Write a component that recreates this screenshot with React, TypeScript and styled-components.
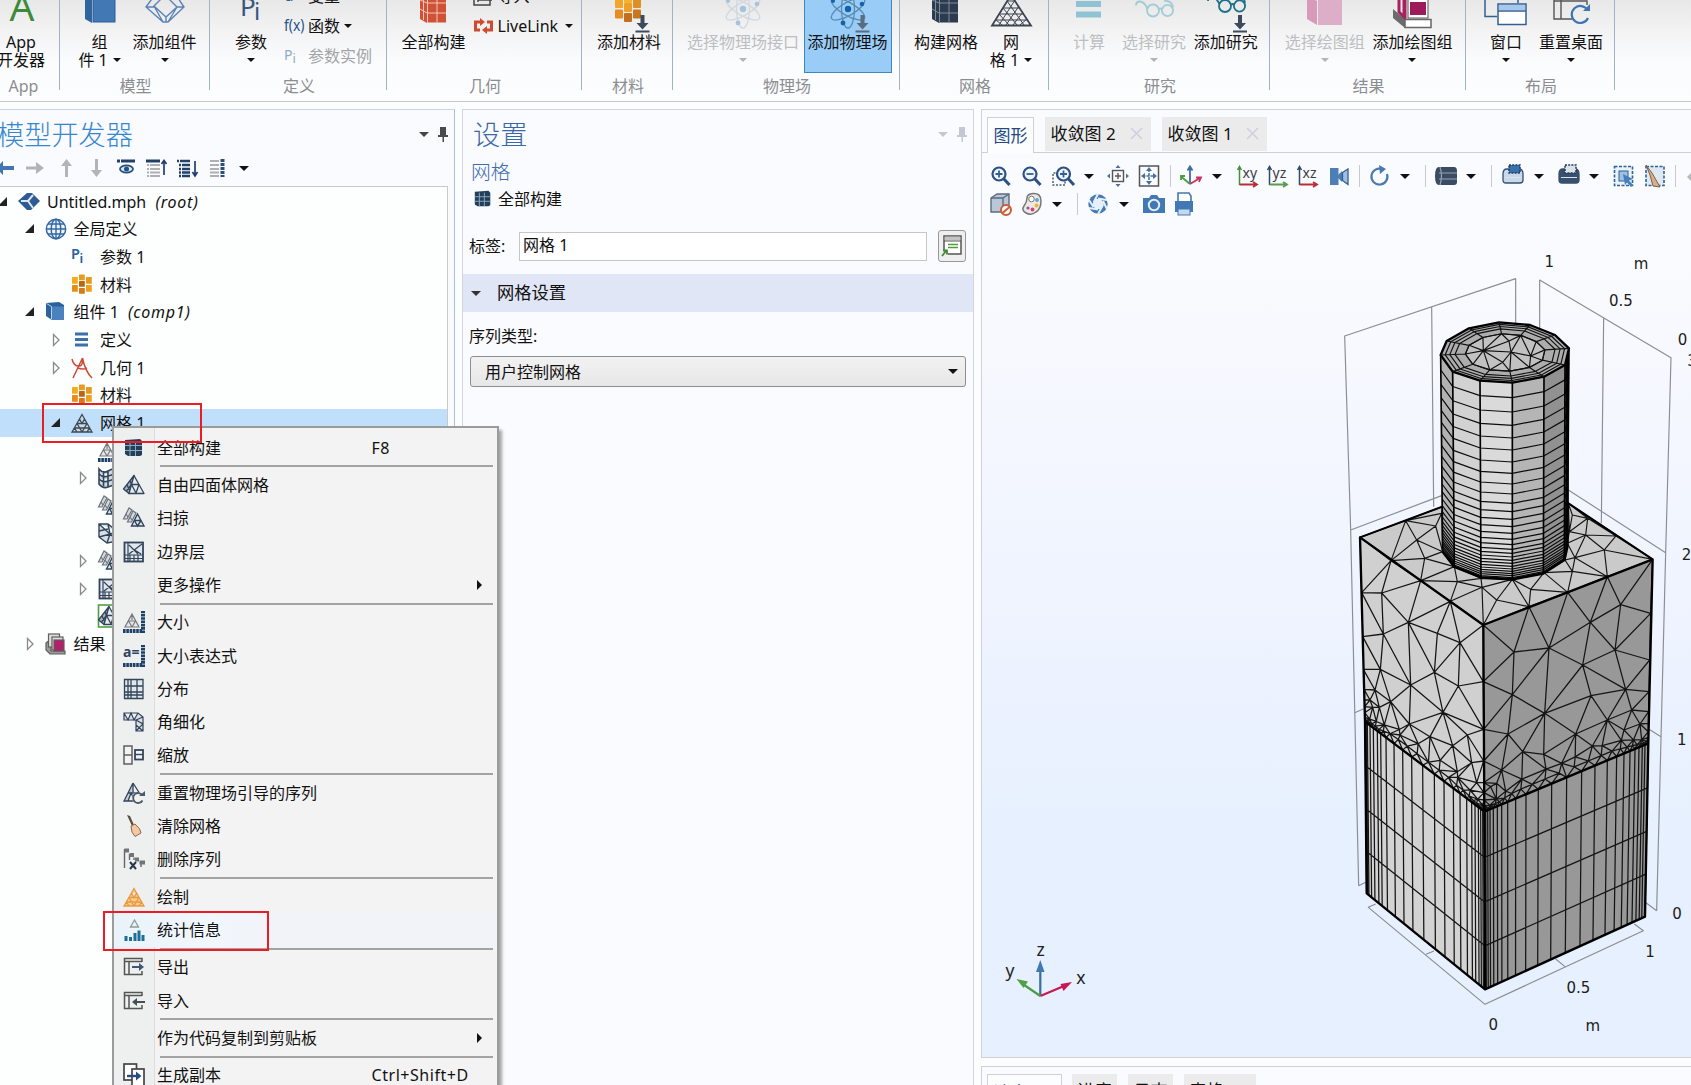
import React from 'react';
import styled, { createGlobalStyle } from 'styled-components';

const SANS = '"Noto Sans", "Noto Sans CJK SC", sans-serif';

const Global = createGlobalStyle`
  * { box-sizing: border-box; }
  body { margin: 0; overflow: hidden; background: #fcfdff; }
`;

/* ---------------------------------------------------------------- shell */

const Shell = styled.div`
  position: relative;
  display: flex;
  flex-direction: column;
  width: 1691px;
  height: 1085px;
  overflow: hidden;
  background: #fcfdff;
  color: #111;
  font-family: ${SANS};
  font-size: 16px;
  line-height: 20px;
  white-space: nowrap;
`;

const Workspace = styled.main`
  display: grid;
  grid-template-columns: 455px 512px 710px;
  column-gap: 7px;
  flex: 1;
  min-height: 0;
  padding-top: 7px;
`;

const Caret = styled.span<{ $color?: string; $size?: number }>`
  flex: none;
  display: inline-block;
  width: 0;
  height: 0;
  border-style: solid;
  border-color: ${p => p.$color ?? '#111'} transparent transparent;
  border-width: ${p => p.$size ?? 5}px ${p => p.$size ?? 5}px 0;
`;

/* --------------------------------------------------------------- ribbon */

const Ribbon = styled.header`
  flex: none;
  display: flex;
  height: 102px;
  overflow: hidden;
  background: linear-gradient(#e8e8e8 0, #f3f3f4 32px, #fbfcfe 62px, #fcfdff 100%);
  border-bottom: 1px solid #c3c6d3;
`;

const Group = styled.section<{ $w: number; $shift?: number }>`
  flex: none;
  display: flex;
  flex-direction: column;
  width: ${p => p.$w}px;
  height: 90px;
  margin-left: ${p => p.$shift ?? 0}px;
  border-right: 1px solid #a3b1c6;
`;

const GroupBody = styled.div<{ $pad: number }>`
  display: flex;
  height: 76px;
  padding-left: ${p => p.$pad}px;
`;

const GroupName = styled.div`
  height: 20px;
  text-align: center;
  color: #8b8d90;
  padding-left: 2px;
`;

const BigButton = styled.div<{ $w: number; $ml?: number; $off?: boolean; $on?: boolean }>`
  flex: none;
  display: flex;
  flex-direction: column;
  align-items: center;
  width: ${p => p.$w}px;
  height: ${p => (p.$on ? 73 : 76)}px;
  margin-left: ${p => p.$ml ?? 0}px;
  line-height: 18px;
  text-align: center;
  color: ${p => (p.$off ? '#bcbec1' : '#111')};
  background: ${p => (p.$on ? '#99cdf8' : 'none')};
  border: ${p => (p.$on ? '1px solid #3c87bd' : 'none')};
  border-top: none;
`;

const BigIcon = styled.svg`
  flex: none;
  display: block;
  width: 44px;
  height: 33px;
`;

const Line = styled.div`
  display: flex;
  align-items: center;
  justify-content: center;
  gap: 5px;
  height: 18px;
`;

const SmallColumn = styled.div<{ $ml: number }>`
  display: flex;
  flex-direction: column;
  margin: -19px 0 0 ${p => p.$ml}px;
`;

const SmallButton = styled.div<{ $off?: boolean }>`
  display: flex;
  align-items: center;
  gap: 3.500px;
  height: 30px;
  flex: none;
  color: ${p => (p.$off ? '#a2a4a8' : '#111')};
`;

const SmallIcon = styled.svg`
  flex: none;
  width: 21px;
  height: 20px;
`;

type BigProps = {
  icon: React.ReactNode; w: number; ml?: number; lines: string[];
  caret?: boolean; off?: boolean; on?: boolean;
};

function Big({ icon, w, ml, lines, caret, off, on }: BigProps) {
  return (
    <BigButton $w={w} $ml={ml} $off={off} $on={on}>
      <BigIcon viewBox="0 0 44 33">{icon}</BigIcon>
      <Line>{lines[0]}</Line>
      <Line>
        {lines[1]}
        {caret && <Caret $size={4} $color={off ? '#b4b4b4' : '#111'} />}
      </Line>
    </BigButton>
  );
}

const DownArrow = ({ x, y = 15, c = '#3b4a5c' }: { x: number; y?: number; c?: string }) => (
  <g fill={c}>
    <path d={`M${x - 2} ${y}h4v8h4l-6 6.500l-6-6.500h4z`} />
    <rect x={x - 7} y={y + 15.500} width="14" height="2" />
  </g>
);

const Cube = ({ x, top, side, front }: { x: number; top: string; side: string; front: string }) => (
  <g>
    <path d={`M${x - 2} -6l7 4v25l-7-4z`} fill={side} />
    <rect x={x + 6} y="-3" width="22" height="25" fill={front} stroke={top} strokeWidth="1" />
  </g>
);

const GridCube = ({ x, main, line }: { x: number; main: string; line: string }) => (
  <g>
    <path d={`M${x} -6l7 4v25l-7-4z`} fill={main} />
    <rect x={x + 7} y="-4" width="19" height="26.500" fill={main} />
    <path d={`M${x + 7.5} -4v27M${x + 17} -4v27M${x + 7} 3h19M${x + 7} 13h19M${x} 0l7 3M${x} 9l7 4M${x + 3.5} -4v24`}
      stroke={line} strokeWidth="1" fill="none" />
  </g>
);

const Atom = ({ ring, dot }: { ring: string; dot: string }) => (
  <g fill="none" stroke={ring} strokeWidth="1.300">
    {[0, 60, 120].map(a => (
      <ellipse key={a} cx="22" cy="9" rx="6.500" ry="19" transform={`rotate(${a} 22 9)`} />
    ))}
    <g fill={dot} stroke="none">
      <circle cx="22" cy="9" r="3.200" /><circle cx="17" cy="23" r="2.400" />
      <circle cx="36" cy="4" r="2.300" /><circle cx="7" cy="1" r="2" />
    </g>
  </g>
);

const Glasses = ({ c, y }: { c: string; y: number }) => (
  <g fill="none" stroke={c} strokeWidth="1.800">
    <circle cx="21" cy={y} r="6" /><circle cx="35.500" cy={y} r="5.600" />
    <path d={`M27 ${y - 1}q1.500-2 3 0M15.500 ${y - 2}Q12 ${y - 9} 8 ${y - 9}t-4 4M41 ${y - 3}Q40 ${y - 10} 32 ${y - 10}`} />
  </g>
);

function RibbonBar() {
  return (
    <Ribbon>
      <Group $w={74} $shift={-14}>
        <GroupBody $pad={0}>
          <Big w={70} lines={['App', '开发器']} icon={
            <text x="23" y="21" fontSize="39" textAnchor="middle" fill="#3c8b3b" fontFamily={SANS}>A</text>} />
        </GroupBody>
        <GroupName>App</GroupName>
      </Group>
      <Group $w={150}>
        <GroupBody $pad={6.600}>
          <Big w={66} lines={['组', '件 1']} caret icon={<Cube x={9} top="#2b5f9e" side="#2f649f" front="#4278b4" />} />
          <Big w={64} lines={['添加组件']} caret icon={
            <g fill="none" stroke="#5b83b5" strokeWidth="1.400">
              <path d="M3 7L14 -8H31L41 7L25 22H20Z M11 6L22 -5L34 7L23 17Z M3 7H11M34 7H41M23 17V22M11 6L20 22M34 7L25 22" />
            </g>} />
        </GroupBody>
        <GroupName>模型</GroupName>
      </Group>
      <Group $w={177}>
        <GroupBody $pad={11}>
          <Big w={60} lines={['参数']} caret icon={
            <g fill="#37577f" fontFamily={SANS}>
              <text x="11" y="16" fontSize="26">P</text><text x="25" y="20" fontSize="24">i</text>
            </g>} />
          <SmallColumn $ml={2.500}>
            <SmallButton><SmallIcon viewBox="0 0 21 20"><text x="1" y="15" fontSize="15" fill="#2f5c93">a=</text></SmallIcon>变量</SmallButton>
            <SmallButton>
              <SmallIcon viewBox="0 0 21 20"><text x="0" y="15" fontSize="15.500" fill="#28558c" textLength="20.500" lengthAdjust="spacingAndGlyphs" fontFamily={SANS}>f(x)</text></SmallIcon>
              函数<Caret $size={4} />
            </SmallButton>
            <SmallButton $off>
              <SmallIcon viewBox="0 0 21 20"><g fill="#8fabc9" fontFamily={SANS}><text x="0" y="14" fontSize="14">P</text><text x="8.500" y="17" fontSize="13">i</text></g></SmallIcon>
              参数实例
            </SmallButton>
          </SmallColumn>
        </GroupBody>
        <GroupName>定义</GroupName>
      </Group>
      <Group $w={195}>
        <GroupBody $pad={11.500}>
          <Big w={70} lines={['全部构建']} icon={<GridCube x={8} main="#cf5237" line="#f3c5b8" />} />
          <SmallColumn $ml={4.500}>
            <SmallButton>
              <SmallIcon viewBox="0 0 21 20"><path d="M1 0V19H17V14M5 0V16M5 14H19M9 10H19" stroke="#444" strokeWidth="1.500" fill="none" /><path d="M8 11l5-4v8z" fill="#c63" /></SmallIcon>
              导入<Caret $size={4} />
            </SmallButton>
            <SmallButton>
              <SmallIcon viewBox="0 0 21 20">
                <path d="M8 6H2.500V14H7M13 14H18.500V6H14" fill="none" stroke="#cf4a30" strokeWidth="3" />
                <path d="M7 2l5 4-5 4zM14 10l-5 4 5 4z" fill="#cf4a30" />
              </SmallIcon>
              LiveLink<Caret $size={4} style={{ marginLeft: 3 }} />
            </SmallButton>
          </SmallColumn>
        </GroupBody>
        <GroupName>几何</GroupName>
      </Group>
      <Group $w={91}>
        <GroupBody $pad={12}>
          <Big w={70} lines={['添加材料']} icon={
            <g>
              {[[8, -1, '#f3a429'], [8, 9.500, '#e88c1e'], [17, -6, '#f5b32d'], [17, 3, '#eea02b'], [17, 13, '#c2701d'], [26, -1, '#e08f23'], [26, 9.500, '#c9761c']].map(([x, y, c], i) => (
                <rect key={i} x={x} y={y} width="8" height="9" rx="1" fill={c as string} />
              ))}
              <DownArrow x={35.500} />
            </g>} />
        </GroupBody>
        <GroupName>材料</GroupName>
      </Group>
      <Group $w={227}>
        <GroupBody $pad={13}>
          <Big w={114} lines={['选择物理场接口']} caret off icon={<Atom ring="#d0d8df" dot="#a5c3dc" />} />
          <Big w={88} ml={3.500} lines={['添加物理场']} on icon={<g><Atom ring="#5a8bb3" dot="#1463a8" /><DownArrow x={36.500} c="#5a6d80" /></g>} />
        </GroupBody>
        <GroupName>物理场</GroupName>
      </Group>
      <Group $w={149}>
        <GroupBody $pad={13}>
          <Big w={66} lines={['构建网格']} icon={<GridCube x={8} main="#2d3b4e" line="#7f8c9c" />} />
          <Big w={60} ml={2} lines={['网', '格 1']} caret icon={
            <g fill="none" stroke="#3c4450" strokeWidth="1">
              <path d="M22 -5L42 25.500H3Z" strokeWidth="1.800" />
              <path d="M18 1H26M14 8H31M10.500 14H35M7 20H39M10 25L26 0M17 25L30 6M24 25L34 12M31 25L38 19M35 25L18 1M28 25L14 8M20 25L10 14M13 25L7 20" />
            </g>} />
        </GroupBody>
        <GroupName>网格</GroupName>
      </Group>
      <Group $w={221}>
        <GroupBody $pad={15}>
          <Big w={50} lines={['计算']} off icon={<g fill="#8fc3d4"><rect x="9" y="1" width="25" height="6" /><rect x="9" y="11.500" width="25" height="6" /></g>} />
          <Big w={68} ml={6} lines={['选择研究']} caret off icon={<Glasses c="#a3cbd7" y={10.500} />} />
          <Big w={66} ml={4.700} lines={['添加研究']} icon={<g><Glasses c="#1b7286" y={6} /><DownArrow x={36} /></g>} />
        </GroupBody>
        <GroupName>研究</GroupName>
      </Group>
      <Group $w={196}>
        <GroupBody $pad={12.800}>
          <Big w={84} lines={['选择绘图组']} caret off icon={
            <g><path d="M4 -4l10 5v24l-10-6z" fill="#d79bb9" /><rect x="15" y="0" width="24" height="25" fill="#dcaec8" /></g>} />
          <Big w={84} ml={3.700} lines={['添加绘图组']} caret icon={
            <g>
              <path d="M3 9l12 10v9L3 18z" fill="#6b6b6b" />
              <path d="M9 -2V12L15 18V-2M14 -2V16" stroke="#a5215f" strokeWidth="3" fill="none" />
              <rect x="18" y="-3" width="20" height="21" fill="#fff" stroke="#555" /><rect x="20" y="2" width="16" height="13" fill="#9d1b5a" />
              <path d="M15 19.500H41V27.500H15Z" fill="#fff" stroke="#666" strokeWidth="1.500" />
            </g>} />
        </GroupBody>
        <GroupName>结果</GroupName>
      </Group>
      <Group $w={149}>
        <GroupBody $pad={15}>
          <Big w={50} lines={['窗口']} caret icon={
            <g fill="none" stroke="#34608f" strokeWidth="1.500">
              <path d="M1 -2V16.500H13M34 -2V3" />
              <rect x="14" y="4" width="28" height="20.500" fill="#fff" /><rect x="15" y="5" width="26" height="5" fill="#a4c8ee" stroke="none" /><path d="M14 11H42" />
            </g>} />
          <Big w={66} ml={7} lines={['重置桌面']} caret icon={
            <g fill="none" stroke="#555" strokeWidth="1.400">
              <path d="M24 19H5V-2M12 0V19M5 1H38V5" /><path d="M38.500 10A8.500 8.500 0 1 0 39 18" stroke="#3f74b2" strokeWidth="2.200" />
              <path d="M34 11h7V4z" fill="#3f74b2" stroke="none" />
            </g>} />
        </GroupBody>
        <GroupName>布局</GroupName>
      </Group>
    </Ribbon>
  );
}

/* ---------------------------------------------------------- mesh glyphs */

const NAVY = '#30455c';

const Glyph = styled.svg`
  flex: none;
  display: block;
  width: 22px;
  height: 22px;
  overflow: visible;
`;

const ruler = (
  <g stroke="#1d4166" strokeWidth="4" strokeDasharray="2.600 0.700">
    <path d="M0 20H19" /><path d="M20 22V0" />
  </g>
);

const miniTriangle = (
  <path d="M9 3L16 16H2ZM5.500 10H12.500M9 16L5.500 10M9 16L12.500 10M9 3V9" fill="#e8e8e8" stroke="#75797e" strokeWidth="1.200" />
);

const sweep = (
  <g fill="#d9d9d9" stroke="#6b7580" strokeWidth="1.200">
    <path d="M6 1L0.500 12H4L9 3Z" /><path d="M10 4L4.500 15H8.500L13 6Z" /><path d="M3 7L5 10M7 10L9 13" />
    <path d="M14.500 7L8.500 19H21ZM11.500 13.500H18M11.500 13.500L14.500 19L18 13.500" fill="#e3e6e9" stroke={NAVY} strokeWidth="1.400" />
  </g>
);

const layers = (
  <g fill="none" stroke={NAVY} strokeWidth="1.200">
    <rect x="1.500" y="1.500" width="18.500" height="19" fill="#e3e6ea" strokeWidth="1.800" />
    <path d="M2 14H20M2 17.500H20M7 14V20M11 14V20M15 14V20M5 2V20M6 13L19 3M6 4L15 13M10 8L18 13" />
  </g>
);

const tetra = (
  <g strokeLinejoin="round" stroke={NAVY} strokeWidth="1.300">
    <path d="M11 1.500L0.500 15L6 19.500Z" fill="#a9b2bc" /><path d="M11 1.500L6 19.500H21Z" fill="#e8eaec" />
    <path d="M8.500 10.500H16M13 19L8.500 10.500M13 19L16 10.500M7 7L8.500 10.500M3.500 17L8.500 10.500M4 11L6.500 16" fill="none" />
  </g>
);

const meshTriangle = (c: string, f: string) => (
  <path d="M11 2.500L21 20H1ZM6 11.500H16M11 20L6 11.500M11 20L16 11.500M8.500 7L11 11.500L13.500 7M3.500 16H18.500M6 20L3.500 16M16 20L18.500 16" fill={f} stroke={c} strokeWidth="1.300" />
);

const glyphs: Record<string, React.ReactNode> = {
  root: <g><path d="M0 10L9 2L14 2L22 10L13 19L9 19Z" fill="#2f5a94" /><path d="M3 10H10L15 4M10 10L15 17" stroke="#dbe7f6" strokeWidth="2" fill="none" /></g>,
  globe: (
    <g fill="none" stroke="#34679f" strokeWidth="1.400">
      <circle cx="11" cy="11" r="9.700" fill="#edf4fb" /><ellipse cx="11" cy="11" rx="4.800" ry="9.700" /><path d="M11 1V21M1.500 11H20.500M3 6H19M3 16H19" />
    </g>),
  pi: <g fill="#2e609c" fontFamily={SANS} fontWeight="600"><text x="0" y="13" fontSize="14.500">P</text><text x="8.500" y="17" fontSize="13">i</text></g>,
  material: (
    <g>
      {[[1, 3, '#f5ab20'], [1, 11, '#e98c16'], [8, 0.500, '#e99a20'], [8, 7, '#b9680f'], [8, 14, '#d57a14'], [15, 3, '#e7981e'], [15, 11, '#f0a01c']].map(([x, y, c], i) => (
        <rect key={i} x={x} y={y} width="5.800" height={i > 1 && i < 5 ? 5.8 : 6.8} rx="0.500" fill={c as string} />
      ))}
    </g>),
  component: <g><path d="M1 2L14 1L19 4V19H7L1 15Z" fill="#2d619e" /><path d="M1.500 2.500L6.500 5.500V18" stroke="#b9d2ec" fill="none" /><rect x="7" y="5.500" width="12" height="13.500" fill="#4a82bf" /></g>,
  defs: <path d="M4 5H17M4 10.500H17M4 16H17" stroke="#3d70a8" strokeWidth="3" />,
  geometry: <path d="M1 2Q3 10 9 9Q12 8 11.500 1M11.500 1L2 21M11.500 1Q14 14 21 21M7 11Q12 13 16 11" fill="none" stroke="#cb4b37" strokeWidth="1.500" />,
  mesh: meshTriangle('#3b4a58', '#cfd8e0'),
  plotMesh: meshTriangle('#ea9a3e', '#f8cb92'),
  size: <g>{miniTriangle}{ruler}</g>,
  sizeExpr: <g><text x="0" y="12" fontSize="14" fontWeight="700" fill={NAVY} fontFamily={SANS}>a=</text>{ruler}</g>,
  mapped: <path d="M1 2Q5 7 10 4T20 2V17Q15 18 10 20T1 17ZM5.500 4V19M10 4V20M15 3V18.500M1 7Q5 11 10 9T20 7M1 12Q5 16 10 14T20 12" fill="#cfd6dd" stroke={NAVY} strokeWidth="1.600" />,
  sweep, layers, tetra,
  convert: <path d="M1 1H10L20 9V18L9 20L1 14ZM1 1L12 11L20 9M1 14L12 11L9 20M10 1L12 11M12 11L20 18M1 8L10 6" fill="#d9dee3" stroke={NAVY} strokeWidth="1.400" />,
  greenTetra: <g><rect x="0.500" y="0" width="22" height="22" fill="#fff" stroke="#4f9e45" strokeWidth="1.600" />{tetra}</g>,
  results: (
    <g stroke="#5f5f5f" strokeWidth="1.200">
      <path d="M1 10L6 6V18H20V21H5L1 17Z" fill="#999" /><rect x="3.500" y="1" width="11" height="13" fill="#ddd" /><rect x="7" y="4" width="11" height="13" fill="#ddd" />
      <rect x="9" y="7" width="10" height="11" fill="#b3206a" />
    </g>),
  build: (
    <g><path d="M2 3L17 2L19 4V18L17 19H5L2 17Z" fill="#22405a" /><path d="M7 4V19M12.500 4V19M2 8.500H19M2 13.500H19" stroke="#93abc2" strokeWidth="1" /></g>),
  grid: <path d="M1.500 1.500H20V20.500H1.500ZM5 2V20M8 2V20M14 2V20M2 8H20M2 14H20M2 17H20" fill="#e4e7ea" stroke={NAVY} strokeWidth="1.300" />,
  corner: <path d="M1 2H15L20 6V20H13V9H1ZM1 2L5 9L8 2L11 9L15 2M13 9L20 6M13 9L20 13L13 20M13 14L20 20" fill="#dcdfe3" stroke={NAVY} strokeWidth="1.200" />,
  scale: (
    <g fill="#f3f3f3" stroke="#555" strokeWidth="1.400">
      <rect x="1" y="2" width="8" height="18" /><path d="M1 11H9" /><rect x="12" y="6" width="8" height="9.500" stroke={NAVY} strokeWidth="1.800" /><path d="M12 10.500H20" stroke={NAVY} />
    </g>),
  reset: (
    <g><path d="M10 1L1 19H11M10 1L17 12M5 11H13M10 1V10M5 19L8 11L11 17" fill="#c9ced4" stroke={NAVY} strokeWidth="1.300" />
      <circle cx="15" cy="16" r="6" fill="#f1f1f1" /><path d="M19.500 13.500A5 5 0 1 0 19.500 18.500" fill="none" stroke="#4b5865" strokeWidth="1.800" /><path d="M16 14h6V9z" fill="#4b5865" /></g>),
  broom: <g><path d="M4 0L7 1L11 10L9 11Z" fill="#5b4c43" /><path d="M8 11L12 9Q18 14 18 18L12 21.500Q8 18 8 11Z" fill="#f2c9a2" stroke="#8c6a4d" /></g>,
  deleteSeq: (
    <g fill="none" stroke="#666" strokeWidth="1.400"><path d="M1.500 1V20M6.500 6V12M11 9.500V12M18 14V19" /><path d="M1.500 2.500H6M6.500 7H11M12 11.500H16M16.500 14.500H22" strokeWidth="4" stroke="#70757a" /><path d="M7 14L13 21M13 14L7 21" stroke="#26384c" strokeWidth="2" /></g>),
  stats: (
    <g><path d="M11.500 1L15.500 8H7.500Z" fill="none" stroke="#8c9a98" strokeWidth="1.300" /><path d="M3 22V17M7.500 22V18M12 22V14M16 22V11.500M20 22V16" stroke="#1d6f94" strokeWidth="3" /></g>),
  export: (
    <g fill="none" stroke="#555" strokeWidth="1.500"><path d="M19 6V2.500H1.500V18.500H19V15M1.500 5.500H19M6 5V18" /><path d="M9 11H19" stroke="#3c5873" strokeWidth="2" /><path d="M16 7L21 11L16 15Z" fill="#3c5873" stroke="none" /></g>),
  import: (
    <g fill="none" stroke="#555" strokeWidth="1.500"><path d="M19 6V2.500H1.500V18.500H19V15M1.500 5.500H19M6 5V18" /><path d="M12 12H22" stroke="#454f59" strokeWidth="2" /><path d="M14 8L9 12L14 16Z" fill="#454f59" stroke="none" /></g>),
  duplicate: (
    <g fill="#fff" stroke="#444" strokeWidth="1.700"><rect x="1" y="0" width="12.500" height="16" /><rect x="9" y="5" width="12" height="17" /><path d="M4 12H15" stroke="#284d80" strokeWidth="2.400" /><path d="M13 7.500L18.500 12L13 16.500Z" fill="#284d80" stroke="none" /></g>),
};

/* --------------------------------------------------------- left panel */

const Panel = styled.section<{ $c: string; $top?: string }>`
  display: flex;
  flex-direction: column;
  min-width: 0;
  background: #fafbfe;
  border: 1.500px solid ${p => p.$c};
  border-top: 1.500px solid ${p => p.$top ?? p.$c};
  border-bottom: none;
`;

const TreePanel = styled(Panel)`
  border-left: none;
`;

const PanelHead = styled.div<{ $pl: number; $pr: number }>`
  display: flex;
  align-items: center;
  height: 46px;
  padding: 3px ${p => p.$pr}px 0 ${p => p.$pl}px;
`;

const PanelTitle = styled.h1<{ $c: string; $ml: number }>`
  flex: 1;
  margin: 0 0 0 ${p => p.$ml}px;
  font-size: 27.200px;
  line-height: 34px;
  font-weight: 300;
  color: ${p => p.$c};
`;

const Pin = ({ c }: { c: string }) => (
  <svg width="12" height="16" viewBox="0 0 12 16"><path d="M3 0H9V8H11V10H7V15H5.500V10H1V8H3Z" fill={c} /></svg>
);

const HeadTools = styled.div<{ $ml?: number }>`
  display: flex;
  align-items: center;
  gap: 8px;
  margin-left: ${p => p.$ml ?? 0}px;
`;

const TreeTools = styled.div`
  display: flex;
  align-items: center;
  height: 30px;
  margin-top: -3px;
`;

const TreeTool = styled.svg<{ $ml: number }>`
  flex: none;
  width: 22px;
  height: 22px;
  margin-left: ${p => p.$ml}px;
`;

const TreeBox = styled.div`
  flex: 1;
  width: 448px;
  margin-top: 3px;
  padding-top: 1px;
  background: #fdfefe;
  border-top: 1.500px solid #c7c9d1;
  border-right: 1px solid #c7c9d1;
`;

const TreeRow = styled.div<{ $level: number; $selected?: boolean }>`
  display: flex;
  align-items: center;
  height: 27.650px;
  padding-left: ${p => p.$level * 26.5}px;
  background: ${p => (p.$selected ? '#bfdffa' : 'none')};
`;

const Expander = styled.svg`
  flex: none;
  width: 12px;
  height: 14px;
  margin: 0 9px 0 -3px;
  overflow: visible;
`;

const TreeText = styled.span`
  margin-left: 7px;
  em { margin-left: 5px; letter-spacing: 0.700px; }
`;

type Node = [level: number, icon: string, label: string, open?: 'open' | 'shut', tag?: string];
const tree: Node[] = [
  [0, 'root', 'Untitled.mph', 'open', '(root)'],
  [1, 'globe', '全局定义', 'open'],
  [2, 'pi', '参数 1'],
  [2, 'material', '材料'],
  [1, 'component', '组件 1', 'open', '(comp1)'],
  [2, 'defs', '定义', 'shut'],
  [2, 'geometry', '几何 1', 'shut'],
  [2, 'material', '材料'],
  [2, 'mesh', '网格 1', 'open'],
  [3, 'size', ''],
  [3, 'mapped', '', 'shut'],
  [3, 'sweep', ''],
  [3, 'convert', ''],
  [3, 'sweep', '', 'shut'],
  [3, 'layers', '', 'shut'],
  [3, 'greenTetra', ''],
  [1, 'results', '结果', 'shut'],
];

function ModelBuilder() {
  return (
    <TreePanel $c="#a9bfd9" $top="#c3d6ee">
      <PanelHead $pl={0} $pr={5}>
        <PanelTitle $c="#3787cf" $ml={-3}>模型开发器</PanelTitle>
        <HeadTools><Caret $size={5.500} $color="#444" /><Pin c="#4a4a4a" /></HeadTools>
      </PanelHead>
      <TreeTools>
        <TreeTool $ml={-6} viewBox="0 0 22 22"><path d="M20 9H9V4L2 11L9 18V13H20Z" fill="#4375b0" /></TreeTool>
        <TreeTool $ml={9} viewBox="0 0 22 22"><path d="M1 9.500H11V5L19 11L11 17V12.500H1Z" fill="#b4b4b6" /></TreeTool>
        <TreeTool $ml={9} viewBox="0 0 22 22"><path d="M9 20V9H5L10.500 2L16 9H12V20Z" fill="#b4b4b6" /></TreeTool>
        <TreeTool $ml={8} viewBox="0 0 22 22"><path d="M9 2V13H5L10.500 20L16 13H12V2Z" fill="#b4b4b6" /></TreeTool>
        <TreeTool $ml={7} viewBox="0 0 22 22"><path d="M2 4H20" stroke="#23406b" strokeWidth="3" strokeDasharray="3 1 15" /><ellipse cx="11.500" cy="12" rx="6.500" ry="3.600" fill="#dbe6f3" stroke="#23507f" strokeWidth="1.800" /><circle cx="11.500" cy="12" r="2.500" fill="#23507f" /></TreeTool>
        <TreeTool $ml={9} viewBox="0 0 22 22"><path d="M0 4H14" stroke="#23406b" strokeWidth="3" /><path d="M1 8H14M1 12H14M1 15.500H14M1 19H14" stroke="#b0b0b4" strokeWidth="2" strokeDasharray="2 1 12" /><path d="M18 18V4M15.500 7L18 3.500L20.500 7" stroke="#23406b" strokeWidth="1.700" fill="none" /></TreeTool>
        <TreeTool $ml={9} viewBox="0 0 22 22"><path d="M0 4H13M2 8H13M2 12H13M2 15.500H13M2 19H13" stroke="#23406b" strokeWidth="2.400" strokeDasharray="2 1 12" /><path d="M18 4V18M15.500 15L18 19L20.500 15" stroke="#23406b" strokeWidth="1.700" fill="none" /></TreeTool>
        <TreeTool $ml={8} viewBox="0 0 22 22"><path d="M3 4H12M3 8H12M3 12H12M3 15.500H12M3 19H12" stroke="#b0b0b4" strokeWidth="2.200" /><path d="M15.500 2V20" stroke="#2a4c80" strokeWidth="4" strokeDasharray="3 1" /></TreeTool>
        <HeadTools $ml={10}><Caret /></HeadTools>
      </TreeTools>
      <TreeBox>
        {tree.map(([level, icon, label, state, tag], i) => (
          <TreeRow key={i} $level={level} $selected={label === '网格 1'}>
            <Expander viewBox="0 0 12 14">
              {state === 'open' && <path d="M10 2V11H1Z" fill="#222" />}
              {state === 'shut' && <path d="M3.500 1.500L9 7L3.500 12.500Z" fill="#fff" stroke="#8a8a8a" strokeWidth="1.300" />}
            </Expander>
            <Glyph viewBox="0 0 22 22">{glyphs[icon]}</Glyph>
            <TreeText>{label} {tag && <em>{tag}</em>}</TreeText>
          </TreeRow>
        ))}
      </TreeBox>
    </TreePanel>
  );
}

/* ------------------------------------------------------------ settings */

const Subtitle = styled.div`
  height: 26px;
  padding: 3px 0 0 8px;
  font-size: 19.800px;
  line-height: 26px;
  font-weight: 300;
  color: #3f6cae;
`;

const BuildRow = styled.div`
  display: flex;
  align-items: center;
  gap: 5px;
  height: 26px;
  margin-top: 4px;
  padding-left: 10px;
`;

const BuildGlyph = styled(Glyph)`
  width: 20px;
  height: 20px;
`;

const LabelRow = styled.div`
  display: flex;
  align-items: center;
  height: 32px;
  margin-top: 18px;
  padding: 0 7px 0 6px;
`;

const FieldLabel = styled.span`
  width: 50px;
`;

const TextField = styled.div`
  width: 408px;
  height: 29px;
  padding: 2px 3px;
  background: #fff;
  border: 1.500px solid #c6c6c8;
`;

const SquareButton = styled.div`
  display: flex;
  align-items: center;
  justify-content: center;
  width: 28px;
  height: 32px;
  margin-left: 10.500px;
  border: 1.500px solid #98989a;
  border-radius: 3px;
  background: #efefef;
`;

const SectionHead = styled.div`
  display: flex;
  align-items: center;
  gap: 16px;
  height: 38px;
  margin-top: 12px;
  padding-left: 8px;
  background: #e0e6f5;
  font-size: 17.300px;
`;

const TypeLabel = styled.div`
  height: 20px;
  margin: 14px 0 10px 6px;
`;

const Select = styled.div`
  display: flex;
  align-items: center;
  justify-content: space-between;
  height: 31px;
  margin: 0 7px 0 7px;
  padding: 0 7px 0 14px;
  border: 1.500px solid #8e8e90;
  border-radius: 3px;
  background: linear-gradient(#f2f2f3, #e7e7e8);
`;

function Settings() {
  return (
    <Panel $c="#d3d5da">
      <PanelHead $pl={11} $pr={5}>
        <PanelTitle $c="#3b67a7" $ml={-1}>设置</PanelTitle>
        <HeadTools><Caret $size={5.500} $color="#c6c7d6" /><Pin c="#c6c7d6" /></HeadTools>
      </PanelHead>
      <Subtitle>网格</Subtitle>
      <BuildRow>
        <BuildGlyph viewBox="0 0 22 22">{glyphs.build}</BuildGlyph>
        全部构建
      </BuildRow>
      <LabelRow>
        <FieldLabel>标签:</FieldLabel>
        <TextField>网格 1</TextField>
        <SquareButton>
          <svg width="22" height="24" viewBox="0 0 22 24">
            <rect x="3" y="2" width="17" height="18" fill="#fff" stroke="#555" strokeWidth="1.500" />
            <rect x="3.700" y="2.700" width="15.600" height="3.600" fill="#c4c4c4" /><path d="M3 7H20" stroke="#555" />
            <path d="M7 10.500H17M7 13.500H17" stroke="#549a3d" strokeWidth="1.600" />
            <path d="M0 16H7V22H0Z" fill="#efefef" /><path d="M1 22L5 17M2 16.500H6V20.500" stroke="#3f8b34" strokeWidth="1.800" fill="none" />
          </svg>
        </SquareButton>
      </LabelRow>
      <SectionHead><Caret $size={5.500} $color="#333" />网格设置</SectionHead>
      <TypeLabel>序列类型:</TypeLabel>
      <Select>用户控制网格<Caret $size={5} /></Select>
    </Panel>
  );
}

/* -------------------------------------------------------- mesh drawing */

type P = [number, number];

/** Bowyer–Watson triangulation; returns the unique edges as one path. */
function triangulate(pts: P[]): string {
  const big: P[] = [[-9000, -9000], [9000, -9500], [300, 12000]];
  const all = [...pts, ...big];
  const n = pts.length;
  let tris: number[][] = [[n, n + 1, n + 2]];
  for (let i = 0; i < n; i++) {
    const [px, py] = all[i];
    const bad = tris.filter(([a, b, c]) => {
      const [ax, ay] = all[a], [bx, by] = all[b], [cx, cy] = all[c];
      const d = 2 * (ax * (by - cy) + bx * (cy - ay) + cx * (ay - by));
      if (!d) return true;
      const a2 = ax * ax + ay * ay, b2 = bx * bx + by * by, c2 = cx * cx + cy * cy;
      const ux = (a2 * (by - cy) + b2 * (cy - ay) + c2 * (ay - by)) / d;
      const uy = (a2 * (cx - bx) + b2 * (ax - cx) + c2 * (bx - ax)) / d;
      return (px - ux) ** 2 + (py - uy) ** 2 < (ax - ux) ** 2 + (ay - uy) ** 2;
    });
    const count = new Map<string, number>();
    bad.forEach(([a, b, c]) => [[a, b], [b, c], [c, a]].forEach(([s, t]) => {
      const k = s < t ? `${s},${t}` : `${t},${s}`;
      count.set(k, (count.get(k) ?? 0) + 1);
    }));
    tris = tris.filter(t => !bad.includes(t));
    count.forEach((v, k) => {
      if (v === 1) { const [s, t] = k.split(',').map(Number); tris.push([s, t, i]); }
    });
  }
  const edges = new Set<string>();
  tris.filter(t => t.every(v => v < n)).forEach(([a, b, c]) =>
    [[a, b], [b, c], [c, a]].forEach(([s, t]) => edges.add(s < t ? `${s},${t}` : `${t},${s}`)));
  return [...edges].map(k => {
    const [s, t] = k.split(',').map(Number);
    return `M${all[s][0]} ${all[s][1]}L${all[t][0]} ${all[t][1]}`;
  }).join('');
}

const mix = (a: P, b: P, t: number): P => [a[0] + (b[0] - a[0]) * t, a[1] + (b[1] - a[1]) * t];
const poly = (p: P[]) => p.map(q => q.join(',')).join(' ');
const seg = (a: P, b: P) => `M${a[0]} ${a[1]}L${b[0]} ${b[1]}`;

const leftX = [135, 138, 142, 150, 160, 172, 182, 198, 222, 248, 275, 308, 343, 372, 400, 420, 440, 455, 465, 475, 482, 488, 493];
const rightX = [493, 497, 503, 510, 520, 532, 545, 563, 587, 618, 655, 695, 740, 785, 825, 862, 890, 912, 930, 945, 957, 967, 975, 985];
const leftSeam: P[] = leftX.map(x => [x, 365 + ((x - 135) * 270) / 358]);
const rightSeam: P[] = rightX.map(x => [x, 635 - ((x - 493) * 205) / 492]);

/** Two graded rows of nodes that refine the mesh towards a seam. */
function refine(seam: P[]): P[] {
  const out: P[] = [];
  for (let i = 1; i < seam.length; i++) {
    const h = Math.min(26, Math.max(7, seam[i][0] - seam[i - 1][0]));
    const m = mix(seam[i - 1], seam[i], 0.5);
    out.push([m[0], m[1] - h * 0.85]);
    if (i % 2 && i > 1 && i < seam.length - 1) out.push([m[0] + 3, m[1] - h * 2]);
  }
  return out;
}

const frontEdge: P[] = [[490, 75], [490, 245], [491, 388], [491, 483], [491, 548], [492, 578], [492, 600], [492, 618]];
const leftFace: P[] = [
  ...leftSeam, ...refine(leftSeam), ...frontEdge,
  [120, -188], [125, -22], [128, 110], [130, 208], [132, 268], [133, 300], [134, 320], [134, 338], [135, 352],
  [213, -118], [302, -58], [391, 4],
  [185, -21], [265, 67], [190, 102], [352, 100], [420, 128], [181, 208], [272, 255], [343, 217], [415, 258],
  [212, 305], [165, 270], [369, 337], [330, 410], [268, 372], [178, 322], [240, 405], [442, 405], [398, 437], [455, 488], [412, 515], [470, 548], [150, 300], [158, 322],
];
const rightFace: P[] = [
  ...rightSeam, ...refine(rightSeam), ...frontEdge,
  [998, -122], [992, 40], [989, 180], [987, 275], [986, 335], [985, 370], [985, 395], [985, 412],
  [627, 20], [743, -23], [862, -70],
  [582, 156], [687, 144], [788, 195], [811, 67], [902, 14], [885, 150], [577, 284], [674, 340], [813, 287], [917, 268],
  [862, 360], [935, 330], [564, 402], [608, 455], [671, 463], [767, 402], [817, 438], [912, 390], [725, 490], [545, 510], [960, 372], [512, 560], [530, 550],
];
const topFace: P[] = [
  [120, 922], [257, 872], [367, 830], [213, 992], [302, 1052], [391, 1114], [490, 1185], [627, 1130], [743, 1087], [862, 1040], [998, 988],
  [803, 865], [888, 918], [745, 820], [619, 736], [290, 930], [347, 888], [365, 850], [314, 985], [368, 965], [403, 1010], [483, 1045], [577, 1048],
  [672, 1028], [735, 990], [742, 940], [412, 1055], [486, 1072], [530, 1110], [632, 1078], [757, 1024], [765, 983], [853, 960], [797, 915], [748, 905], [757, 855],
];

const capRim: P[] = [[362, 375], [380, 333], [447, 295], [537, 277], [630, 285], [705, 315], [747, 355], [735, 405], [672, 440], [577, 458], [480, 452], [398, 425]];
const capCentre: P = [557, 367];
const capRing = (s: number): P[] => capRim.map(p => mix(capCentre, p, s));
const inner = capRing(0.62);
const capCore = triangulate([...inner, [567, 333], [490, 362], [548, 397], [573, 366], [632, 378]]);

const barTop: P[] = [[362, 375], [398, 425], [480, 452], [577, 458], [672, 440], [735, 405], [747, 355]];
const barBottom: P[] = [[368, 965], [403, 1010], [483, 1042], [577, 1048], [670, 1030], [733, 990], [742, 950]];
const barFill = ['#b2b2b2', '#d2d2d2', '#dadada', '#b5b5b5', '#919191', '#4c4c4c'];
const barRows = [503, 546, 586, 624, 660, 696, 730, 762, 792, 820, 845, 868, 890, 910, 928, 944, 958, 970, 981, 991, 1000, 1009, 1017, 1024, 1031, 1037, 1043]
  .map(y => (y - 458) / 590);

function sideGrid(seam: P[], bottomA: P, bottomB: P) {
  const a = seam[0], b = seam[seam.length - 1];
  const verticals = seam.map(p => seg(p, mix(bottomA, bottomB, (p[0] - a[0]) / (b[0] - a[0])))).join('');
  const horizontals = [0.257, 0.508, 0.755].map(t => seg(mix(a, bottomA, t), mix(b, bottomB, t))).join('');
  return verticals + horizontals;
}

const Scene = styled.svg`
  display: block;
  width: 709px;
  height: 832px;
`;

const tickLabels: [string, number, number][] = [
  ['1', 1549.3, 262], ['m', 1641, 264], ['0.5', 1621, 300.5], ['0', 1682.5, 339.5], ['3', 1692, 360.5], ['2', 1686.5, 555],
  ['1', 1681.7, 739.5], ['0', 1677, 914], ['1', 1650, 951.5], ['0.5', 1578.5, 987.5], ['0', 1493.3, 1025], ['m', 1592.7, 1026],
];

function MeshScene() {
  return (
    <Scene viewBox="982 218 709 832">
      <defs>
        <clipPath id="cl"><polygon points="118,-188 490,75 493,635 135,365" /></clipPath>
        <clipPath id="cr"><polygon points="490,75 998,-122 985,430 493,635" /></clipPath>
      </defs>
      <g transform="translate(1320 230) scale(0.33333)" strokeLinejoin="round">
        <path fill="none" stroke="#8b8d92" strokeWidth="3.500"
          d="M587 285V146L74 318L92 900L116 1967M335 230L341 830M92 900L365 797M659 300V150L1053 383L1037 968L1010 2042M851 262L844 880M745 780L1037 968" />
        <polygon points="120,922 619,736 998,988 490,1185" fill="#cacaca" />
        <path d={triangulate(topFace)} stroke="#151515" strokeWidth="3.500" fill="none" />
        <path d="M120 922L619 736L998 988" stroke="#000" strokeWidth="6" fill="none" />
        {barFill.map((f, i) => (
          <polygon key={i} fill={f} points={poly([barTop[i], barTop[i + 1], barBottom[i + 1], barBottom[i]])} />
        ))}
        <path stroke="#0c0c0c" strokeWidth="3.600" fill="none"
          d={barRows.map(t => 'M' + barTop.map((p, i) => mix(p, barBottom[i], t).join(' ')).join('L')).join('')} />
        <path stroke="#000" strokeWidth="5" fill="none" d={barTop.map((p, i) => seg(p, barBottom[i])).join('')} />
        <polyline points={poly(barBottom)} stroke="#000" strokeWidth="8" fill="none" />
        <path d="M742 370V950" stroke="#000" strokeWidth="8" />
        <polygon points={poly(capRim)} fill="#adadad" stroke="#000" strokeWidth="7" />
        <polygon points={poly(inner)} fill="#c2c2c2" />
        <g stroke="#111" strokeWidth="3.500" fill="none">
          {[0.93, 0.86, 0.78, 0.62].map(s => <polygon key={s} points={poly(capRing(s))} />)}
          <path d={capRim.map((p, i) => seg(p, inner[i])).join('') + capCore} />
        </g>
      </g>
      <g transform="translate(1320 600) scale(0.33333)" strokeLinejoin="round">
        <path fill="none" stroke="#8b8d92" strokeWidth="3.500"
          d="M104 338L130 327M116 857L137 847M987 388L1023 410M978 908L1010 932M167 912L145 922L495 1213L970 992L943 972M318 1063L342 1053M735 1100L707 1077" />
        <polygon points="120,-188 490,75 493,635 135,365" fill="#d0d0d0" />
        <polygon points="490,75 998,-122 985,430 493,635" fill="#989898" />
        <polygon points="135,365 493,635 495,1168 140,880" fill="#d3d3d3" />
        <polygon points="493,635 985,430 975,950 495,1168" fill="#989898" />
        <g stroke="#151515" strokeWidth="3.800" fill="none">
          <path d={triangulate(leftFace)} clipPath="url(#cl)" />
          <path d={triangulate(rightFace)} clipPath="url(#cr)" />
          <path d={sideGrid(leftSeam, [140, 880], [495, 1168])} />
          <path d={sideGrid(rightSeam, [495, 1168], [975, 950])} />
        </g>
        <path fill="none" stroke="#000" strokeWidth="7"
          d="M120 -188L490 75L998 -122L985 430L975 950L495 1168L140 880L135 365ZM490 75L493 635L495 1168M135 365L493 635L985 430" />
      </g>
      <g fontFamily='"DejaVu Sans", sans-serif' fontSize="15" fill="#1c1c1c" textAnchor="middle" dominantBaseline="central">
        {tickLabels.map(([t, x, y], i) => <text key={i} x={x} y={y}>{t}</text>)}
      </g>
      <g strokeWidth="2.200" fill="none">
        <path d="M1040.300 996V968" stroke="#3a6da0" /><path d="M1040.300 996L1064 986" stroke="#cc1650" /><path d="M1040.300 996L1022 983.500" stroke="#4b9c43" />
      </g>
      <path d="M1040.300 960L1044.500 972H1036Z" fill="#4179b3" />
      <path d="M1072 982L1063.500 991L1060.500 984Z" fill="#cc1650" />
      <path d="M1016.500 979L1028 981.500L1023.500 988Z" fill="#4fa046" />
      <g fontFamily={SANS} fontSize="17.500" fill="#222" textAnchor="middle">
        <text x="1040.500" y="956">z</text><text x="1010" y="977">y</text><text x="1081" y="984">x</text>
      </g>
    </Scene>
  );
}

/* ------------------------------------------------------ graphics panel */

const RightColumn = styled.div`
  display: flex;
  flex-direction: column;
  gap: 8px;
  min-width: 0;
`;

const Graphics = styled.section`
  flex: none;
  height: 949px;
  overflow: hidden;
  border: 1.500px solid #d0d2d7;
  border-right: none;
  background: linear-gradient(#fafbfe 0, #fafbfe 130px, #eef3ff 520px, #e6f0fe 740px, #e6f0fe 100%);
`;

const Tabs = styled.div`
  display: flex;
  height: 43px;
  padding: 7px 0 0 5px;
  background: #fafbfe;
  border-bottom: 1.500px solid #cfd1d7;
`;

const Tab = styled.div<{ $w: number; $on?: boolean; $ml?: number }>`
  display: flex;
  flex: none;
  align-items: center;
  justify-content: space-between;
  width: ${p => p.$w}px;
  height: ${p => (p.$on ? 36 : 34)}px;
  margin-left: ${p => p.$ml ?? 0}px;
  padding: 0 8px 0 5.500px;
  background: ${p => (p.$on ? '#fcfdff' : '#ebebec')};
  border: ${p => (p.$on ? '1.500px solid #cfd1d7' : 'none')};
  border-bottom: none;
  color: ${p => (p.$on ? '#27497f' : '#111')};
  font-size: 17px;
`;

const Close = () => (
  <svg width="13" height="13" viewBox="0 0 13 13"><path d="M1 0L12 11M12 0L1 11" stroke="#cfcfe0" strokeWidth="1.500" /></svg>
);

const Tools = styled.div<{ $h: number; $mt: number }>`
  display: flex;
  align-items: center;
  height: ${p => p.$h}px;
  margin-top: ${p => p.$mt}px;
  padding-left: 8px;
`;

const ToolSlot = styled.div<{ $ml: number; $w: number }>`
  flex: none;
  display: flex;
  justify-content: center;
  width: ${p => p.$w}px;
  margin-left: ${p => p.$ml}px;
`;

const Divider = styled.i`
  width: 1px;
  height: 22px;
  background: #c9c9cc;
`;

const BLUE = '#355f94';
const magnifier = (
  <g fill="none" stroke="#2d5182"><circle cx="9" cy="9" r="6.500" fill="#eef5fc" strokeWidth="2.200" /><path d="M13.500 13.500L19.500 20" strokeWidth="3" /></g>
);
const axes = (label: string, v: string, h: string) => (
  <g>
    <path d="M2.500 20V2M0.500 5L2.500 1.500L4.500 5" stroke={v} strokeWidth="1.500" fill="none" />
    <path d="M2.500 19.500H19M16 17L20 19.500L16 22" stroke={h} strokeWidth="1.800" fill="none" />
    <text x="5.500" y="13" fontSize="14" fill="#3a4049" fontFamily={SANS}>{label}</text>
  </g>
);
const boxDrive = (body: string, top: string) => (
  <g><path d="M1 9Q1 4 5 4H17Q21 4 21 9V15Q21 18 18 18H4Q1 18 1 15Z" fill={body} stroke="#34506f" strokeWidth="1.300" /><path d="M3 12.500H19" stroke="#d7e3ef" /><rect x="7" y="0" width="11" height="8" fill={top} stroke="#1f3d5e" strokeWidth="1.500" strokeDasharray="2 1.200" /></g>
);

const toolArt: Record<string, React.ReactNode> = {
  zoomIn: <g>{magnifier}<path d="M5.500 9H12.500M9 5.500V12.500" stroke={BLUE} strokeWidth="1.800" /></g>,
  zoomOut: <g>{magnifier}<path d="M5.500 9H12.500" stroke={BLUE} strokeWidth="1.800" /></g>,
  zoomBox: <g><path d="M7 8H1V20H13V16" fill="none" stroke="#4c5f78" strokeWidth="1.500" strokeDasharray="2 1.500" /><g transform="translate(2.500 0)">{magnifier}<path d="M5.500 9H12.500M9 5.500V12.500" stroke={BLUE} strokeWidth="1.800" /></g></g>,
  extents: <g fill="none" stroke="#555" strokeWidth="1.400"><rect x="5.500" y="5.500" width="11" height="11" /><path d="M8 11H14M11 8V14" /><path d="M11 0L8.500 3H13.500ZM11 22L8.500 19H13.500ZM0 11L3 8.500V13.500ZM22 11L19 8.500V13.500Z" fill="#44719f" stroke="none" /></g>,
  fit: <g fill="none" stroke="#555" strokeWidth="1.500"><rect x="1.500" y="1" width="19" height="20" /><path d="M11 4V18M4.500 11H17.500" stroke="#44719f" strokeDasharray="3 1" /><path d="M11 2L8 6H14ZM11 20L8 16H14ZM3 11L7 8V14ZM19 11L15 8V14Z" fill="#44719f" stroke="none" /></g>,
  triad: <g fill="none" strokeWidth="1.800"><path d="M10 19V2M7.500 5.500L10 1.500L12.500 5.500" stroke="#3b6ca6" /><path d="M10 19L1 11.500M1 15V11H5" stroke="#4b9c43" /><path d="M10 19L20 13M16 12.500L21 12.500L19 17" stroke="#c7325e" /></g>,
  xy: axes('xy', '#3f9140', '#b63037'), yz: axes('yz', '#2e4a70', '#5a9c4e'), xz: axes('xz', '#2e4a70', '#b63037'),
  camera3d: <g fill="#4d7fb6"><rect x="2" y="3" width="8.500" height="17" /><path d="M10 10L14 6V17L10 13Z" /><path d="M14.500 7.500L20 4V19.500L14.500 15.500Z" fill="#9fc0e2" stroke="#34608f" strokeWidth="1.300" /></g>,
  rotate: <g fill="none"><path d="M13 4A8 8 0 1 0 18 9" stroke="#4a7bb0" strokeWidth="2.200" /><path d="M10 0L17 4L11 9Z" fill="#4a7bb0" /></g>,
  cylinder: <g><path d="M4 2H19Q22 2 22 6V17Q22 20 19 20H4Q0 20 0 11T4 2Z" fill="#3b4c62" /><path d="M4 8H22M4 14H22M5 2Q8 11 5 20" stroke="#93a4b7" fill="none" strokeWidth="1.200" /></g>,
  driveA: boxDrive('#c9d9ea', '#3971ad'), driveB: boxDrive('#38506b', '#dfe3e8'),
  selectBox: <g><rect x="1.500" y="1.500" width="18" height="19" fill="#e9f1f9" stroke="#2f6296" strokeWidth="1.600" strokeDasharray="3 1.500" /><rect x="6" y="6" width="9" height="10" fill="#9fc1e2" stroke="#2f6296" /><path d="M10 9L20 14L16 15.500L20 20L18 22L14 17.500L12 20Z" fill="#4480bb" /></g>,
  sweepBox: <g><rect x="2" y="1.500" width="18" height="19" fill="#dfe8f1" stroke="#2f6296" strokeWidth="1.600" strokeDasharray="3 1.500" /><path d="M2 0L8 8L16 22L9 21L6 10Z" fill="#dcae86" stroke="#76604e" /></g>,
  edge: <path d="M0 12L6 6V18Z" fill="#b8b8b8" />,
  blockOff: <g><path d="M1 5L7 1H19V13L13 19H1Z" fill="#b9c7d8" stroke="#5c6c7e" strokeWidth="1.400" /><path d="M1 5H13V19M13 5L19 1" fill="none" stroke="#5c6c7e" strokeWidth="1.400" /><circle cx="16" cy="17" r="5" fill="#fff" stroke="#cf5a33" strokeWidth="2" /><path d="M12.500 20L19.500 14" stroke="#cf5a33" strokeWidth="2" /></g>,
  palette: <g><path d="M12 0.500Q20 0 20 8T15 19Q10 23 5 20T3 13T6 5T12 0.500Z" fill="#eee8e2" stroke="#777" strokeWidth="1.500" /><circle cx="10.500" cy="6" r="2.800" fill="#fff" stroke="#777" /><circle cx="16" cy="7" r="1.900" fill="#5aa3e0" /><circle cx="15.500" cy="12.500" r="1.900" fill="#f1b237" /><circle cx="11.500" cy="16.500" r="1.900" fill="#d2466e" /><circle cx="7" cy="15" r="1.600" fill="#8a56ba" /></g>,
  shutter: <g><circle cx="11" cy="11" r="9.700" fill="#4179b4" /><path d="M11 1L6.500 9.500M20 7L11 5.500M20 16L16 8M11 21L16 12M2 15L11 16.500M2 7L6.500 14" stroke="#e6f0fa" strokeWidth="2" /><path d="M8 6H14L17 11L14 16H8L5.500 11Z" fill="#e6f0fa" /></g>,
  photo: <g><path d="M0 5H6L8 2H14L16 5H22V20H0Z" fill="#4278b3" /><circle cx="11" cy="12" r="5.200" fill="#4278b3" stroke="#e4eefa" strokeWidth="2" /></g>,
  printer: <g><path d="M5 9V0H16L18 3V9" fill="#fff" stroke="#4278b3" strokeWidth="1.600" /><path d="M2 8H20V19H2Z" fill="#4278b3" /><rect x="5" y="16" width="12" height="6" fill="#c4d8ee" stroke="#4278b3" /></g>,
};

type Slot = [string, number];
const row1: Slot[] = [
  ['zoomIn', 0], ['zoomOut', 9], ['zoomBox', 9], ['caret', 10], ['extents', 13], ['fit', 9], ['|', 10], ['triad', 8.5], ['caret', 10],
  ['xy', 15], ['yz', 8.5], ['xz', 8], ['camera3d', 9], ['|', 9], ['rotate', 9], ['caret', 9], ['|', 15], ['cylinder', 9], ['caret', 9],
  ['|', 15], ['driveA', 9.5], ['caret', 10], ['driveB', 14], ['caret', 9.5], ['selectBox', 14], ['sweepBox', 9], ['|', 9], ['edge', 11],
];
const row2: Slot[] = [
  ['blockOff', 0], ['palette', 9], ['caret', 9], ['|', 15], ['shutter', 8.5], ['caret', 10], ['photo', 14], ['printer', 8.5],
];

const ToolRow = ({ items, h, mt }: { items: Slot[]; h: number; mt: number }) => (
  <Tools $h={h} $mt={mt}>
    {items.map(([kind, ml], i) => (
      <ToolSlot key={i} $ml={ml} $w={kind === '|' ? 1 : kind === 'caret' ? 10 : 22}>
        {kind === '|' ? <Divider /> : kind === 'caret' ? <Caret /> : <Glyph viewBox="0 0 22 22">{toolArt[kind]}</Glyph>}
      </ToolSlot>
    ))}
  </Tools>
);

const Messages = styled(Graphics)`
  flex: 1;
  height: auto;
  background: #fafbfe;
`;

function GraphicsColumn() {
  return (
    <RightColumn>
      <Graphics>
        <Tabs>
          <Tab $w={47} $on>图形</Tab>
          <Tab $w={106} $ml={11}>收敛图 2<Close /></Tab>
          <Tab $w={105} $ml={11}>收敛图 1<Close /></Tab>
        </Tabs>
        <ToolRow items={row1} h={28} mt={9} />
        <ToolRow items={row2} h={28} mt={0} />
        <MeshScene />
      </Graphics>
      <Messages>
        <Tabs>
          <Tab $w={75} $on>消息<Close /></Tab>
          <Tab $w={45} $ml={10}>进度</Tab>
          <Tab $w={45} $ml={11}>日志</Tab>
          <Tab $w={72} $ml={11}>表格 1</Tab>
        </Tabs>
      </Messages>
    </RightColumn>
  );
}

/* --------------------------------------------------------- context menu */

const Menu = styled.div`
  position: absolute;
  left: 112px;
  top: 426px;
  width: 387px;
  padding: 3px 0 0;
  background: linear-gradient(90deg, #eeefef 0, #eeefef 40px, #dcdcde 40px, #dcdcde 41px, #f3f3f3 41px);
  border: 2px solid #9b9b9b;
  border-bottom: none;
  box-shadow: 3px 4px 3px rgba(0, 0, 0, 0.35);
`;

const MenuItem = styled.div<{ $hot?: boolean }>`
  display: flex;
  align-items: center;
  height: 33.300px;
  padding-left: 8.500px;
  background: ${p => (p.$hot ? 'linear-gradient(90deg, #eaf3fa 0, #f1f7fd 100px, #f2f3f8 160px, #f2f3f8 100%)' : 'none')};
`;

const MenuText = styled.span`
  width: 214.500px;
  margin-left: 12.500px;
`;

const Shortcut = styled.span`
  letter-spacing: 0.550px;
`;

const MenuRule = styled.div`
  height: 2px;
  margin: 1px 4px 1.050px 46px;
  background: #a3a3a3;
`;

const SubArrow = styled.i`
  margin-left: 105px;
  border-style: solid;
  border-width: 5px 0 5px 5px;
  border-color: transparent transparent transparent #111;
`;

type Entry = [icon: string, text: string, key?: string] | null;
const menu: Entry[] = [
  ['build', '全部构建', 'F8'], null,
  ['tetra', '自由四面体网格'], ['sweep', '扫掠'], ['layers', '边界层'], ['', '更多操作', '>'], null,
  ['size', '大小'], ['sizeExpr', '大小表达式'], ['grid', '分布'], ['corner', '角细化'], ['scale', '缩放'], null,
  ['reset', '重置物理场引导的序列'], ['broom', '清除网格'], ['deleteSeq', '删除序列'], null,
  ['plotMesh', '绘制'], ['stats', '统计信息'], null,
  ['export', '导出'], ['import', '导入'], null,
  ['', '作为代码复制到剪贴板', '>'], null,
  ['duplicate', '生成副本', 'Ctrl+Shift+D'],
];

const Marker = styled.div<{ $x: number; $y: number; $w: number; $h: number }>`
  position: absolute;
  left: ${p => p.$x}px;
  top: ${p => p.$y}px;
  width: ${p => p.$w}px;
  height: ${p => p.$h}px;
  border: 2px solid #ec1c24;
`;

export default function App() {
  return (
    <Shell>
      <Global />
      <RibbonBar />
      <Workspace>
        <ModelBuilder />
        <Settings />
        <GraphicsColumn />
      </Workspace>
      <Menu>
        {menu.map((m, i) => m === null ? <MenuRule key={i} /> : (
          <MenuItem key={i} $hot={m[0] === 'stats'}>
            <Glyph viewBox="0 0 22 22">{glyphs[m[0]]}</Glyph>
            <MenuText>{m[1]}</MenuText>
            {m[2] === '>' ? <SubArrow /> : <Shortcut>{m[2]}</Shortcut>}
          </MenuItem>
        ))}
      </Menu>
      <Marker $x={42} $y={403} $w={160} $h={40} />
      <Marker $x={103} $y={911} $w={166} $h={40} />
    </Shell>
  );
}
